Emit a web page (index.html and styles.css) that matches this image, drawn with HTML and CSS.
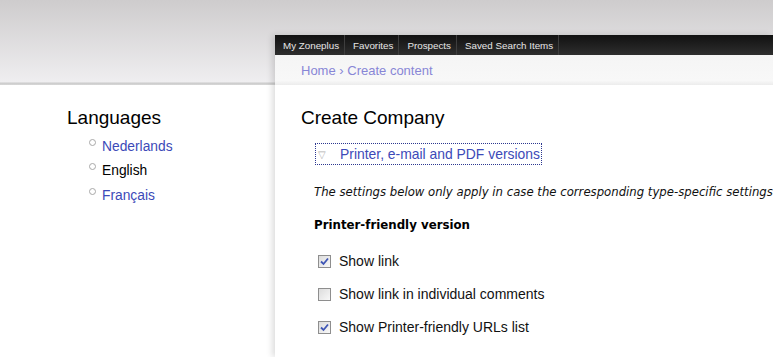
FILE: index.html
```html
<!DOCTYPE html>
<html lang="en">
<head>
    <meta charset="UTF-8">
    <title>Create Company</title>
    <link rel="stylesheet" href="styles.css">
</head>
<body>
<div class="page">
    <div class="sidebar">
        <h2 class="block-title">Languages</h2>
        <ul class="lang-list">
            <li><a href="#">Nederlands</a></li>
            <li class="active">English</li>
            <li><a href="#">Français</a></li>
        </ul>
    </div>

    <div class="main">
        <ul class="topnav">
            <li>My Zoneplus</li>
            <li>Favorites</li>
            <li>Prospects</li>
            <li>Saved Search Items</li>
        </ul>
        <div class="breadcrumb"><a href="#">Home</a> › <a href="#">Create content</a></div>

        <div class="content">
            <h1 class="page-title">Create Company</h1>
            <div class="legend">
                <span class="toggle">▽</span>
                <a href="#">Printer, e-mail and PDF versions</a>
            </div>
            <p class="description">The settings below only apply in case the corresponding type-specific settings are not set.</p>
            <h3 class="section-title">Printer-friendly version</h3>
            <div class="option">
                <span class="check checked"><svg viewBox="0 0 9 9" width="9" height="9"><path d="M1 4.5 L3.5 7 L8 1.5" fill="none" stroke="#3f56b5" stroke-width="1.8"/></svg></span>
                Show link
            </div>
            <div class="option">
                <span class="check"></span>
                Show link in individual comments
            </div>
            <div class="option">
                <span class="check checked"><svg viewBox="0 0 9 9" width="9" height="9"><path d="M1 4.5 L3.5 7 L8 1.5" fill="none" stroke="#3f56b5" stroke-width="1.8"/></svg></span>
                Show Printer-friendly URLs list
            </div>
        </div>
    </div>
</div>
</body>
</html>
```

FILE: styles.css
```css
* {
    margin: 0;
    padding: 0;
}

body {
    height: 357px;
    overflow: hidden;
    font-family: "Liberation Sans", Arial, sans-serif;
    background: linear-gradient(#cecccd 0, #efeef0 82px, #cbcbcb 83px, #d8d8d8 85px, #ffffff 85px);
}

a {
    color: #3c4ab8;
    text-decoration: none;
}

.page {
    display: flex;
    height: 357px;
}

.sidebar {
    width: 275px;
    padding-top: 107px;
    flex-shrink: 0;
}

.block-title {
    font-weight: normal;
    font-size: 19px;
    margin-left: 67px;
    color: #000;
}

.lang-list {
    list-style: none;
    margin: 5px 0 0 89px;
}

.lang-list li {
    display: flex;
    align-items: center;
    font-size: 13.8px;
    height: 24.5px;
    color: #000;
}

.lang-list li::before {
    content: "";
    width: 5px;
    height: 5px;
    border: 1px solid #a8a8a8;
    border-radius: 50%;
    margin-right: 6px;
    position: relative;
    top: -4px;
}

.main {
    flex: 1;
    margin-top: 35px;
    background: #fff;
    box-shadow: -3px 0 6px rgba(0, 0, 0, 0.13);
    overflow: hidden;
}

.topnav {
    list-style: none;
    display: flex;
    height: 20px;
    background: linear-gradient(#111111, #2e2e2e);
}

.topnav li {
    color: #e6e6e6;
    font-size: 9.8px;
    line-height: 21px;
    padding: 0 5px 0 8px;
    border-right: 1px solid #3e3e3e;
}

.breadcrumb {
    height: 30px;
    line-height: 32px;
    padding-left: 26px;
    font-size: 13px;
    color: #8886d6;
    background: linear-gradient(#f5f5f5, #f8f8f8 85%, #ececec);
}

.breadcrumb a {
    color: #8886d6;
}

.content {
    padding: 22px 0 0 26px;
    white-space: nowrap;
}

.page-title {
    font-weight: normal;
    font-size: 19px;
    color: #000;
}

.legend {
    display: inline-flex;
    align-items: center;
    margin: 14px 0 0 14px;
    padding: 2px 1px 2px 2px;
    border: 1px dotted #2c3790;
    font-size: 13.9px;
}

.toggle {
    color: #b0b0b0;
    font-size: 10px;
    width: 22px;
}

.description {
    margin: 20px 0 0 13px;
    font-family: "DejaVu Sans", Verdana, sans-serif;
    font-style: italic;
    font-size: 11.7px;
    color: #111;
}

.section-title {
    margin: 19px 0 0 13px;
    font-family: "DejaVu Sans", Verdana, sans-serif;
    font-size: 11.8px;
    color: #000;
}

.option {
    display: flex;
    align-items: center;
    margin: 19px 0 0 17px;
    height: 20px;
    font-size: 14px;
    color: #111;
}

.option + .option {
    margin-top: 13px;
}

.check {
    display: inline-flex;
    align-items: center;
    justify-content: center;
    width: 11px;
    height: 11px;
    border: 1px solid #8e8e8e;
    background: linear-gradient(135deg, #dcdcdc, #f8f8f8);
    margin-right: 8px;
}
```
